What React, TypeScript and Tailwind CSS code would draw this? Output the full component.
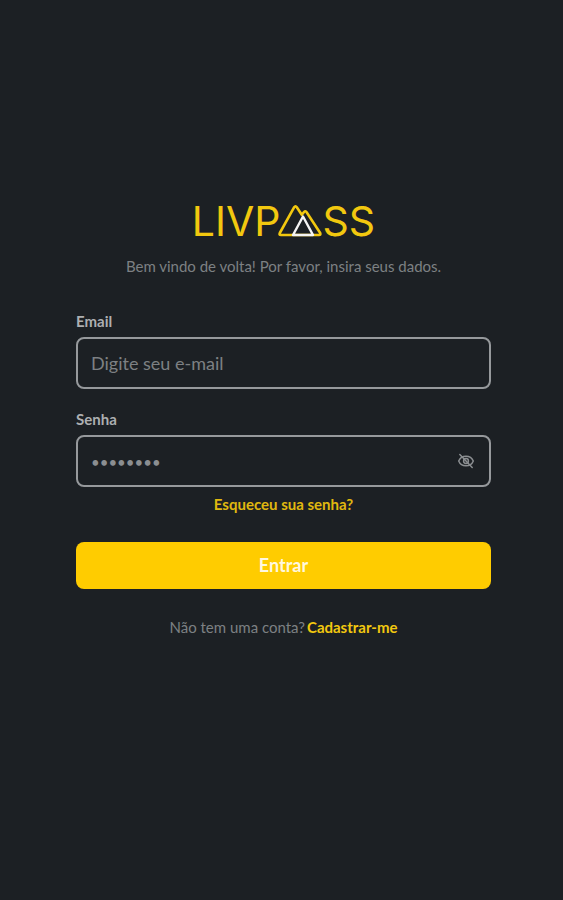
import React, { useState } from 'react';

const inputClass =
  'w-full h-[52px] rounded-lg border-2 border-[#96999c] bg-transparent pl-[13px] pr-12 text-[18px] text-[#8b8e91] placeholder:text-[#7d8083] outline-none focus:border-[#ffcc00]';

const labelClass = 'text-[15px] leading-5 font-bold text-[#adafb1]';

function PeaksIcon() {
  return (
    <svg viewBox="0 0 46 34" className="-ml-1 h-[34px] w-[46px]" fill="none" strokeLinejoin="round" aria-hidden="true">
      <path
        d="M17.2 3.200Q18.500 1.200 19.800 3.200L24.800 10.800L27 8Q28.400 6.400 29.600 8.200L43.200 29Q44 31 42 31H4Q1.800 31 2.800 29Z"
        stroke="#f2c80f"
        strokeWidth="2.6"
      />
      <path d="M26 12.500L36 31H16Z" stroke="#f4f4f4" strokeWidth="2.400" />
    </svg>
  );
}

function EyeOffIcon() {
  return (
    <svg viewBox="0 0 18 16" className="h-4 w-[18px]" fill="none" stroke="currentColor" strokeWidth="1.5" strokeLinecap="round" aria-hidden="true">
      <path d="M1.700 8C3 4.800 5.800 3.200 9 3.200s6 1.600 7.300 4.800C15 11.200 12.200 12.800 9 12.800S3 11.200 1.700 8Z" />
      <circle cx="9" cy="8" r="2.400" />
      <path d="M2.800 1.500L15.200 14.500" />
    </svg>
  );
}

export default function App() {
  const [showPassword, setShowPassword] = useState(false);

  return (
    <main className="min-h-screen bg-[#1c2024] pl-[76px] pr-[72px] pt-[200px] pb-16 font-['Lato',sans-serif]">
      <h1 className="flex items-center justify-center font-['Inter',sans-serif] text-[41px] leading-[42px] text-[#f2c80f]">
        <span>LIVP</span>
        <PeaksIcon />
        <span>SS</span>
      </h1>
      <p className="mt-[14px] text-center text-[15px] leading-5 text-[#7d8083]">
        Bem vindo de volta! Por favor, insira seus dados.
      </p>

      <form className="mt-[35px] flex flex-col" onSubmit={(e) => e.preventDefault()}>
        <label htmlFor="email" className={labelClass}>Email</label>
        <input id="email" type="email" placeholder="Digite seu e-mail" className={`${inputClass} mt-[6px]`} />

        <label htmlFor="password" className={`${labelClass} mt-5`}>Senha</label>
        <div className="relative mt-[6px]">
          <input
            id="password"
            type={showPassword ? 'text' : 'password'}
            placeholder="••••••••"
            className={`${inputClass} placeholder:text-[15px] placeholder:text-[#8b8e91]`}
          />
          <button
            type="button"
            onClick={() => setShowPassword(!showPassword)}
            aria-label="Mostrar senha"
            className="absolute inset-y-0 right-4 flex items-center text-[#8b8e91]"
          >
            <EyeOffIcon />
          </button>
        </div>

        <a href="#" className="mt-[7px] self-center text-[15px] leading-5 font-bold text-[#e0b90f]">
          Esqueceu sua senha?
        </a>

        <button type="submit" className="mt-7 h-[47px] rounded-lg bg-[#ffcc00] text-[18px] font-bold text-[#fff8df]">
          Entrar
        </button>
      </form>

      <p className="mt-7 flex justify-center gap-[2px] text-[15px] leading-5 text-[#7d8083]">
        <span>Não tem uma conta?</span>
        <a href="#" className="font-bold text-[#f2c80f]">Cadastrar-me</a>
      </p>
    </main>
  );
}
